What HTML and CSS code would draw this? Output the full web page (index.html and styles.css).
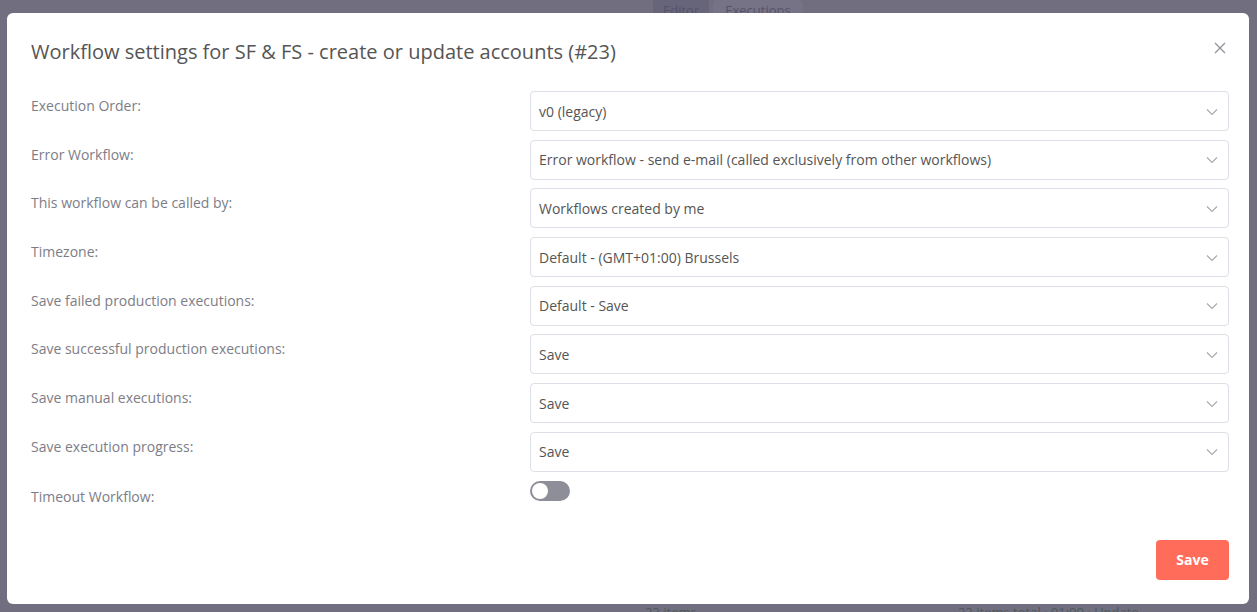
FILE: index.html
```html
<!DOCTYPE html>
<html>
<head>
<meta charset="utf-8">
<link rel="stylesheet" href="styles.css">
</head>
<body>
<div class="page">
  <div class="tabs">
    <span class="tab">Editor</span>
    <span class="tab tab-active">Executions</span>
  </div>
  <div class="page-foot">
    <span class="foot-a">23 items</span>
    <span class="foot-b">23 items total · 01:00 · Update</span>
  </div>
</div>
<div class="overlay">
  <div class="modal">
    <div class="modal-head">
      <h2 class="modal-title">Workflow settings for SF &amp; FS - create or update accounts (#23)</h2>
      <svg class="close" width="12" height="12" viewBox="0 0 12 12"><path d="M1 1L11 11M11 1L1 11" stroke="#909399" stroke-width="1.3" fill="none"/></svg>
    </div>
    <div class="form">
      <div class="row"><div class="label">Execution Order:</div><div class="field"><div class="select"><span>v0 (legacy)</span><svg class="chev" width="12" height="8" viewBox="0 0 12 8"><path d="M1 1.5L6 6.5L11 1.5" stroke="#a8abb2" stroke-width="1.2" fill="none"/></svg></div></div></div>
      <div class="row"><div class="label">Error Workflow:</div><div class="field"><div class="select"><span>Error workflow - send e-mail (called exclusively from other workflows)</span><svg class="chev" width="12" height="8" viewBox="0 0 12 8"><path d="M1 1.5L6 6.5L11 1.5" stroke="#a8abb2" stroke-width="1.2" fill="none"/></svg></div></div></div>
      <div class="row"><div class="label">This workflow can be called by:</div><div class="field"><div class="select"><span>Workflows created by me</span><svg class="chev" width="12" height="8" viewBox="0 0 12 8"><path d="M1 1.5L6 6.5L11 1.5" stroke="#a8abb2" stroke-width="1.2" fill="none"/></svg></div></div></div>
      <div class="row"><div class="label">Timezone:</div><div class="field"><div class="select"><span>Default - (GMT+01:00) Brussels</span><svg class="chev" width="12" height="8" viewBox="0 0 12 8"><path d="M1 1.5L6 6.5L11 1.5" stroke="#a8abb2" stroke-width="1.2" fill="none"/></svg></div></div></div>
      <div class="row"><div class="label">Save failed production executions:</div><div class="field"><div class="select"><span>Default - Save</span><svg class="chev" width="12" height="8" viewBox="0 0 12 8"><path d="M1 1.5L6 6.5L11 1.5" stroke="#a8abb2" stroke-width="1.2" fill="none"/></svg></div></div></div>
      <div class="row"><div class="label">Save successful production executions:</div><div class="field"><div class="select"><span>Save</span><svg class="chev" width="12" height="8" viewBox="0 0 12 8"><path d="M1 1.5L6 6.5L11 1.5" stroke="#a8abb2" stroke-width="1.2" fill="none"/></svg></div></div></div>
      <div class="row"><div class="label">Save manual executions:</div><div class="field"><div class="select"><span>Save</span><svg class="chev" width="12" height="8" viewBox="0 0 12 8"><path d="M1 1.5L6 6.5L11 1.5" stroke="#a8abb2" stroke-width="1.2" fill="none"/></svg></div></div></div>
      <div class="row"><div class="label">Save execution progress:</div><div class="field"><div class="select"><span>Save</span><svg class="chev" width="12" height="8" viewBox="0 0 12 8"><path d="M1 1.5L6 6.5L11 1.5" stroke="#a8abb2" stroke-width="1.2" fill="none"/></svg></div></div></div>
      <div class="row row-toggle"><div class="label label-toggle">Timeout Workflow:</div><div class="field"><div class="switch"><span class="knob"></span></div></div></div>
    </div>
    <div class="modal-foot">
      <button class="save">Save</button>
    </div>
  </div>
</div>
</body>
</html>
```
FILE: styles.css
```css
* { box-sizing: border-box; }
html, body { margin: 0; padding: 0; }
body {
  width: 1257px;
  height: 612px;
  overflow: hidden;
  background: #716e7f;
  font-family: "Open Sans", "Liberation Sans", sans-serif;
}
.page {
  height: 612px;
  display: flex;
  flex-direction: column;
  justify-content: space-between;
}
.tabs {
  display: flex;
  padding-left: 653px;
  gap: 4px;
  height: 13px;
}
.tab {
  font-size: 13px;
  color: #55526a;
  padding: 4px 10px 0 10px;
  background: #67657a;
  line-height: 13px;
  overflow: hidden;
}
.tab-active {
  background: #757385;
  border-radius: 5px 5px 0 0;
  padding: 4px 12px 0 12px;
}
.page-foot {
  display: flex;
  height: 8px;
  overflow: hidden;
  padding-left: 645px;
  font-size: 13px;
  color: #4d5a5a;
  line-height: 16px;
}
.foot-a { width: 313px; }
.overlay {
  position: fixed;
  inset: 0;
  padding: 13px 8px 8px 7px;
}
.modal {
  background: #fff;
  border-radius: 6px;
  height: 591px;
  padding: 0 20px 0 24px;
  display: flex;
  flex-direction: column;
}
.modal-head {
  display: flex;
  align-items: center;
  justify-content: space-between;
  height: 76px;
}
.modal-title {
  margin: 0;
  font-weight: 400;
  font-size: 20px;
  color: #555555;
  padding-top: 1px;
}
.close { margin-right: 3px; margin-top: -6px; }
.form {
  display: flex;
  flex-direction: column;
  gap: 8.7px;
  padding-top: 2px;
}
.row {
  display: flex;
}
.label {
  width: 499px;
  flex: none;
  font-size: 14px;
  color: #7d7d87;
  padding-top: 5px;
  line-height: 20px;
}
.field { flex: 1; }
.select {
  height: 40px;
  border: 1px solid #dcdfe6;
  border-radius: 4px;
  display: flex;
  align-items: center;
  justify-content: space-between;
  padding: 0 10px 0 8px;
  font-size: 14px;
  color: #555555;
}
.chev { margin-top: 1px; }
.label-toggle { padding-top: 6px; }
.switch {
  width: 40px;
  height: 20px;
  border-radius: 10px;
  background: #8d8e98;
  position: relative;
}
.knob {
  position: absolute;
  left: 2px;
  top: 2px;
  width: 16px;
  height: 16px;
  border-radius: 50%;
  background: #fff;
}
.modal-foot {
  display: flex;
  justify-content: flex-end;
  margin-top: 33px;
}
.save {
  width: 73px;
  height: 40px;
  border: none;
  border-radius: 4px;
  background: #ff6d5a;
  color: #fff;
  font-family: "Open Sans", "Liberation Sans", sans-serif;
  font-weight: 700;
  font-size: 14px;
}
```
